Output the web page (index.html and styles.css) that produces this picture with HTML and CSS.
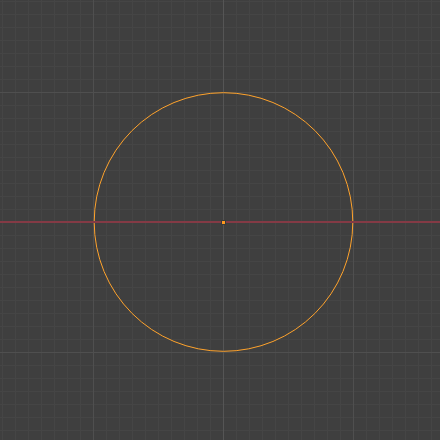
FILE: index.html
```html
<!DOCTYPE html>
<html>
<head>
<meta charset="utf-8">
<link rel="stylesheet" href="styles.css">
</head>
<body>
<div class="viewport">
<svg class="grid" width="440" height="440" viewBox="0 0 440 440" shape-rendering="crispEdges">
  <defs>
    <pattern id="minor" x="2" y="1" width="13" height="13" patternUnits="userSpaceOnUse">
      <rect x="0" y="0" width="1" height="13" class="minor"/>
      <rect x="0" y="0" width="13" height="1" class="minor"/>
    </pattern>
    <pattern id="major" x="93" y="92" width="130" height="130" patternUnits="userSpaceOnUse">
      <rect x="0" y="0" width="1" height="130" class="major"/>
      <rect x="0" y="0" width="130" height="1" class="major"/>
    </pattern>
  </defs>
  <rect width="440" height="440" fill="url(#minor)"/>
  <rect width="440" height="440" fill="url(#major)"/>
  <rect x="223" y="0" width="1" height="440" class="center"/>
  <circle cx="223.5" cy="222" r="129.3" class="ring" shape-rendering="auto"/>
  <rect x="0" y="221" width="440" height="2" class="axis-x"/>
  <rect x="221" y="220" width="5" height="5" class="origin-edge"/>
  <rect x="222" y="221" width="3" height="3" class="origin"/>
</svg>
</div>
</body>
</html>
```
FILE: styles.css
```css
html, body {
  margin: 0;
  padding: 0;
  background: #3f3f3f;
}
.viewport {
  width: 440px;
  height: 440px;
  background: #3f3f3f;
  overflow: hidden;
}
.grid { display: block; }
.minor { fill: #454545; }
.major { fill: #4f4f4f; }
.center { fill: #555555; }
.axis-x { fill: #843a45; }
.ring { fill: none; stroke: #ffa32c; stroke-width: 1; }
.origin-edge { fill: #3a3a3a; }
.origin { fill: #ff9a1f; }
```
